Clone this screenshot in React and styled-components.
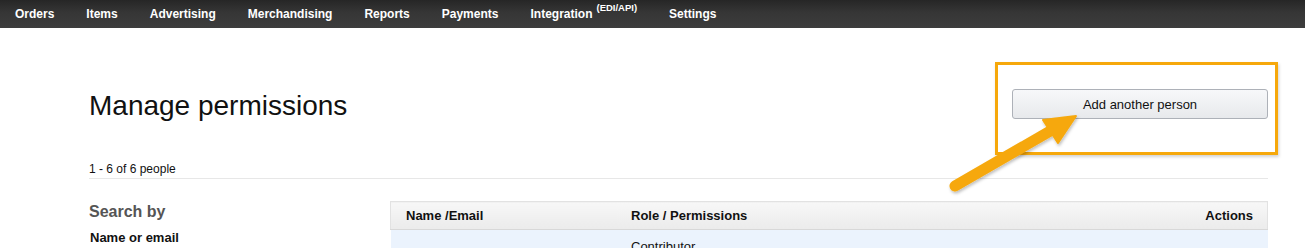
import React from 'react'
import styled, { createGlobalStyle } from 'styled-components'

const GlobalStyle = createGlobalStyle`
  html, body {
    margin: 0;
    padding: 0;
    background: #fff;
    font-family: "Liberation Sans", Arial, sans-serif;
    color: #111;
  }
`

const Page = styled.div`
  position: relative;
  width: 1305px;
  height: 248px;
  overflow: hidden;
`

const NavBar = styled.nav`
  display: flex;
  align-items: center;
  height: 28px;
  padding-left: 15px;
  gap: 32px;
  background: linear-gradient(to bottom, #262626 0%, #363636 45%, #3d3d3d 100%);
`

const NavItem = styled.a`
  color: #fff;
  font-size: 12px;
  font-weight: bold;
  text-decoration: none;
  white-space: nowrap;
  line-height: 28px;
`

const Sup = styled.sup`
  font-size: 9.5px;
  margin-left: 4px;
  vertical-align: 7px;
  line-height: 0;
`

const Content = styled.main`
  padding: 0 37px 0 89px;
`

const Header = styled.header`
  display: flex;
  align-items: center;
  justify-content: space-between;
  padding-top: 61px;
  height: 30px;
`

const Title = styled.h1`
  margin: 0;
  font-size: 28px;
  font-weight: normal;
  line-height: 30px;
  color: #111;
  position: relative;
  top: 2px;
`

const Button = styled.button`
  width: 256px;
  height: 30px;
  border: 1px solid #adb1b8;
  border-radius: 3px;
  background: linear-gradient(to bottom, #f7f8fa, #e7e9ec);
  font-family: inherit;
  font-size: 13px;
  color: #111;
  cursor: pointer;
`

const Count = styled.div`
  margin-top: 43px;
  font-size: 12px;
  line-height: 14px;
  color: #111;
  padding-bottom: 2px;
  border-bottom: 1px solid #e7e7e7;
`

const Body = styled.div`
  display: grid;
  grid-template-columns: 301px 1fr;
  margin-top: 22px;
`

const Sidebar = styled.aside`
  padding-top: 1px;
`

const SideTitle = styled.h2`
  margin: 0;
  font-size: 16px;
  font-weight: bold;
  color: #555;
  line-height: 20px;
`

const Label = styled.div`
  margin-top: 8px;
  padding-left: 1px;
  font-size: 13px;
  font-weight: bold;
  color: #111;
`

const Table = styled.table`
  width: 100%;
  border-collapse: collapse;
  font-size: 13px;
`

const Th = styled.th`
  height: 27px;
  padding: 0 14px 0 15px;
  text-align: ${p => p.$align || 'left'};
  font-weight: bold;
  color: #111;
  width: ${p => p.$width || 'auto'};
  background: linear-gradient(to bottom, #f7f7f7, #ebebeb);
  border-top: 1px solid #e2e2e2;
  border-bottom: 1px solid #d8d8d8;
  &:first-child { border-left: 1px solid #e2e2e2; }
  &:last-child { border-right: 1px solid #e2e2e2; }
`

const Td = styled.td`
  padding: 10px 14px 0 15px;
  background: #ebf3fd;
  vertical-align: top;
  color: #111;
  line-height: 14px;
`

const Callout = styled.div`
  position: absolute;
  left: 995px;
  top: 62px;
  width: 277px;
  height: 87px;
  border: 3px solid #f6a80b;
  box-shadow: 1px 2px 3px rgba(0, 0, 0, 0.18);
  pointer-events: none;
`

const Arrow = styled.svg`
  position: absolute;
  left: 0;
  top: 0;
  pointer-events: none;
`

const navItems = ['Orders', 'Items', 'Advertising', 'Merchandising', 'Reports', 'Payments']

const App = () => (
  <Page>
    <GlobalStyle />
    <NavBar>
      {navItems.map(item => <NavItem key={item}>{item}</NavItem>)}
      <NavItem>Integration<Sup>(EDI/API)</Sup></NavItem>
      <NavItem>Settings</NavItem>
    </NavBar>
    <Content>
      <Header>
        <Title>Manage permissions</Title>
        <Button>Add another person</Button>
      </Header>
      <Count>1 - 6 of 6 people</Count>
      <Body>
        <Sidebar>
          <SideTitle>Search by</SideTitle>
          <Label>Name or email</Label>
        </Sidebar>
        <Table>
          <thead>
            <tr>
              <Th $width="196px">Name /Email</Th>
              <Th>Role / Permissions</Th>
              <Th $align="right">Actions</Th>
            </tr>
          </thead>
          <tbody>
            <tr>
              <Td></Td>
              <Td>Contributor</Td>
              <Td></Td>
            </tr>
          </tbody>
        </Table>
      </Body>
    </Content>
    <Callout />
    <Arrow width="1305" height="248" viewBox="0 0 1305 248">
      <defs>
        <filter id="sh" x="-20%" y="-20%" width="140%" height="140%">
          <feDropShadow dx="1" dy="2" stdDeviation="1.5" floodColor="#000" floodOpacity="0.25" />
        </filter>
      </defs>
      <g filter="url(#sh)" fill="#f6a80b" stroke="#f6a80b">
        <line x1="955" y1="186" x2="1052" y2="130" strokeWidth="11" strokeLinecap="round" />
        <polygon points="1076,116 1043,120 1058,143" strokeWidth="2" strokeLinejoin="round" />
      </g>
    </Arrow>
  </Page>
)

export default App
